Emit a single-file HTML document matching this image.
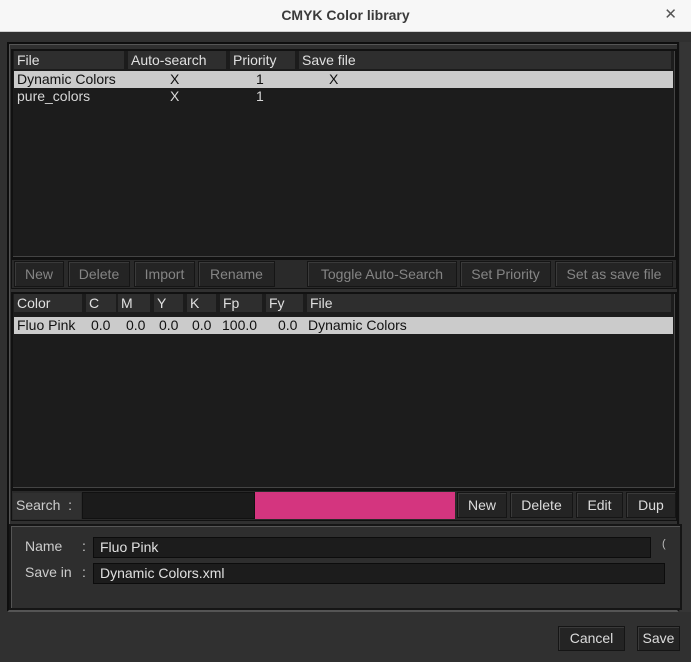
<!DOCTYPE html>
<html><head><meta charset="utf-8"><style>
*{box-sizing:border-box;margin:0;padding:0}
body{width:691px;height:662px;overflow:hidden;background:#303030;font-family:"Liberation Sans",sans-serif;font-size:14px;color:#d8d8d8;position:relative}
.a{position:absolute}
.title{left:0;top:0;width:691px;height:32px;background:#f7f7f7;border-bottom:1px solid #cfcfcf;text-align:center;font-weight:bold;color:#3a3a3a;font-size:14px;line-height:31px}
.x{right:14px;top:5px;color:#555;font-size:15px}
.frame{border:2px solid #0e0e0e;border-right-color:#111;box-shadow:inset 1px 1px 0 #555}
.list{background:#1c1c1c;border:2px solid #111;box-shadow:inset -1px -1px 0 #444}
.hd{background:#2e2e2e;height:18px;top:0;border-right:2px solid #1c1c1c;padding-left:3px;line-height:18px;color:#e0e0e0;white-space:nowrap;overflow:hidden}
.row{height:17px;line-height:17px;white-space:nowrap}
.sel{background:#cbcbcb;color:#111}
.btn{background:#242424;border:1px solid #151515;box-shadow:inset 1px 1px 0 #3a3a3a;text-align:center;line-height:24px;color:#858585}
.btn.on{color:#dcdcdc}
.inp{background:#1c1c1c;border:1px solid #0c0c0c;padding-left:6px;line-height:19px;color:#e0e0e0}
</style></head><body>
<div class="a title">CMYK Color library</div>
<div class="a x">✕</div>

<div class="a frame" style="left:7px;top:42px;width:672px;height:570px;border-bottom-color:#555"></div>
<div class="a" style="left:680px;top:42px;width:11px;height:570px;background:#353535"></div>

<!-- top list -->
<div class="a list" style="left:11px;top:49px;width:666px;height:210px">
 <div class="a hd" style="left:1px;width:112px">File</div>
 <div class="a hd" style="left:115px;width:100px">Auto-search</div>
 <div class="a hd" style="left:217px;width:67px">Priority</div>
 <div class="a hd" style="left:286px;width:374px">Save file</div>
 <div class="a row sel" style="left:1px;top:20px;width:659px"><span class="a" style="left:3px">Dynamic Colors</span><span class="a" style="left:156px">X</span><span class="a" style="left:242px">1</span><span class="a" style="left:315px">X</span></div>
 <div class="a row" style="left:1px;top:37px;width:659px"><span class="a" style="left:3px">pure_colors</span><span class="a" style="left:156px">X</span><span class="a" style="left:242px">1</span></div>
</div>
<div class="a" style="left:11px;top:259px;width:666px;height:30px;background:#2a2a2a;border:1px solid #111"></div>
<div class="a btn" style="left:14px;top:261px;width:50px;height:26px">New</div>
<div class="a btn" style="left:68px;top:261px;width:62px;height:26px">Delete</div>
<div class="a btn" style="left:134px;top:261px;width:61px;height:26px">Import</div>
<div class="a btn" style="left:198px;top:261px;width:77px;height:26px">Rename</div>
<div class="a btn" style="left:307px;top:261px;width:150px;height:26px">Toggle Auto-Search</div>
<div class="a btn" style="left:460px;top:261px;width:91px;height:26px">Set Priority</div>
<div class="a btn" style="left:555px;top:261px;width:118px;height:26px">Set as save file</div>

<!-- color list -->
<div class="a list" style="left:11px;top:292px;width:666px;height:198px">
 <div class="a hd" style="left:1px;width:70px">Color</div>
 <div class="a hd" style="left:73px;width:32px">C</div>
 <div class="a hd" style="left:105px;width:34px">M</div>
 <div class="a hd" style="left:141px;width:31px">Y</div>
 <div class="a hd" style="left:174px;width:31px">K</div>
 <div class="a hd" style="left:207px;width:44px">Fp</div>
 <div class="a hd" style="left:253px;width:39px">Fy</div>
 <div class="a hd" style="left:294px;width:366px">File</div>
 <div class="a row sel" style="left:1px;top:23px;width:659px"><span class="a" style="left:3px">Fluo Pink</span><span class="a" style="left:77px">0.0</span><span class="a" style="left:112px">0.0</span><span class="a" style="left:145px">0.0</span><span class="a" style="left:178px">0.0</span><span class="a" style="left:208px">100.0</span><span class="a" style="left:264px">0.0</span><span class="a" style="left:294px">Dynamic Colors</span></div>
</div>

<!-- search row -->
<div class="a" style="left:11px;top:490px;width:666px;height:31px;background:#2a2a2a;border:1px solid #111"></div>
<div class="a" style="left:13px;top:493px;width:68px;height:26px;background:#303030;line-height:24px;padding-left:3px;color:#ccc">Search&nbsp; :</div>
<div class="a" style="left:82px;top:492px;width:173px;height:27px;background:#1b1b1b;border:1px solid #111"></div>
<div class="a" style="left:255px;top:492px;width:200px;height:27px;background:#d4357f"></div>
<div class="a btn on" style="left:457px;top:492px;width:50px;height:26px">New</div>
<div class="a btn on" style="left:510px;top:492px;width:63px;height:26px">Delete</div>
<div class="a btn on" style="left:576px;top:492px;width:47px;height:26px">Edit</div>
<div class="a btn on" style="left:626px;top:492px;width:50px;height:26px">Dup</div>

<!-- bottom panel -->
<div class="a" style="left:9px;top:524px;width:673px;height:86px;background:#2e2e2e;border:2px solid #151515;box-shadow:inset 1px 1px 0 #555"></div>
<div class="a" style="left:25px;top:538px;color:#ccc">Name</div>
<div class="a" style="left:82px;top:538px;color:#ccc">:</div>
<div class="a inp" style="left:93px;top:537px;width:558px;height:21px">Fluo Pink</div>
<div class="a" style="left:662px;top:538px;color:#bbb;font-size:11px">(</div>
<div class="a" style="left:25px;top:564px;color:#ccc">Save in</div>
<div class="a" style="left:82px;top:564px;color:#ccc">:</div>
<div class="a inp" style="left:93px;top:563px;width:572px;height:21px">Dynamic Colors.xml</div>

<div class="a btn on" style="left:558px;top:626px;width:67px;height:25px;line-height:23px">Cancel</div>
<div class="a btn on" style="left:637px;top:626px;width:43px;height:25px;line-height:23px">Save</div>
</body></html>
